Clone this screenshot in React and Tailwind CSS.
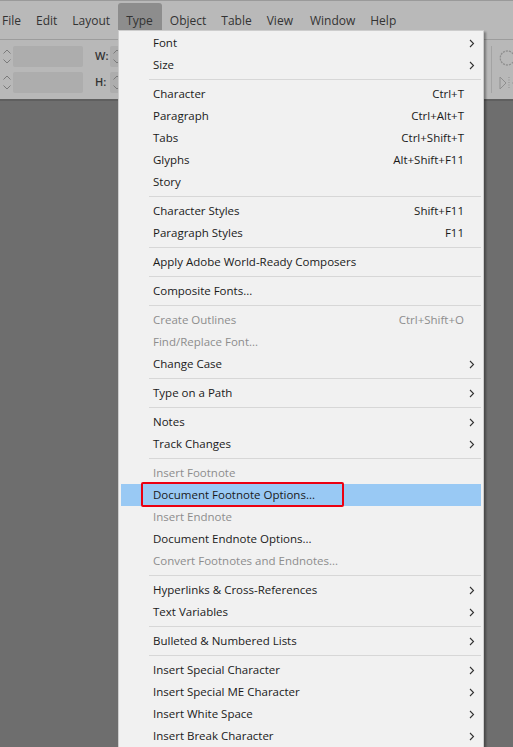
import React from "react";

const menuBar = ["File", "Edit", "Layout", "Type", "Object", "Table", "View", "Window", "Help"];

const items = [
  { label: "Font", sub: true },
  { label: "Size", sub: true },
  { sep: true },
  { label: "Character", key: "Ctrl+T" },
  { label: "Paragraph", key: "Ctrl+Alt+T" },
  { label: "Tabs", key: "Ctrl+Shift+T" },
  { label: "Glyphs", key: "Alt+Shift+F11" },
  { label: "Story" },
  { sep: true },
  { label: "Character Styles", key: "Shift+F11" },
  { label: "Paragraph Styles", key: "F11" },
  { sep: true },
  { label: "Apply Adobe World-Ready Composers" },
  { sep: true },
  { label: "Composite Fonts..." },
  { sep: true },
  { label: "Create Outlines", key: "Ctrl+Shift+O", off: true },
  { label: "Find/Replace Font...", off: true },
  { label: "Change Case", sub: true },
  { sep: true },
  { label: "Type on a Path", sub: true },
  { sep: true },
  { label: "Notes", sub: true },
  { label: "Track Changes", sub: true },
  { sep: true },
  { label: "Insert Footnote", off: true },
  { label: "Document Footnote Options...", active: true },
  { label: "Insert Endnote", off: true },
  { label: "Document Endnote Options..." },
  { label: "Convert Footnotes and Endnotes...", off: true },
  { sep: true },
  { label: "Hyperlinks & Cross-References", sub: true },
  { label: "Text Variables", sub: true },
  { sep: true },
  { label: "Bulleted & Numbered Lists", sub: true },
  { sep: true },
  { label: "Insert Special Character", sub: true },
  { label: "Insert Special ME Character", sub: true },
  { label: "Insert White Space", sub: true },
  { label: "Insert Break Character", sub: true },
];

const Chevron = () => (
  <svg width="6" height="9" viewBox="0 0 6 9" className="text-[#333]">
    <path d="M1 1 L4.5 4.5 L1 8" fill="none" stroke="currentColor" strokeWidth="1.1" />
  </svg>
);

const Spin = () => (
  <div className="flex flex-col items-center justify-center gap-[5px] w-[13px] h-full">
    <svg width="8" height="5" viewBox="0 0 8 5">
      <path d="M0.5 4.5 L4 1 L7.5 4.5" fill="none" stroke="#7a7a7a" strokeWidth="1" />
    </svg>
    <svg width="8" height="5" viewBox="0 0 8 5">
      <path d="M0.5 0.5 L4 4 L7.5 0.5" fill="none" stroke="#7a7a7a" strokeWidth="1" />
    </svg>
  </div>
);

const MenuRow = ({ item }) => {
  if (item.sep) {
    return (
      <div className="h-[7px] flex items-center pl-[28px]">
        <div className="h-px w-full bg-[#d7d7d7]" />
      </div>
    );
  }
  return (
    <div
      className={`relative h-[22px] flex items-center ${item.active ? "bg-[#99c9f4]" : ""} ${
        item.off ? "text-[#8d8d8d]" : "text-[#1a1a1a]"
      }`}
    >
      <span className="flex-1 pl-[32px] whitespace-nowrap">{item.label}</span>
      {item.key && <span className="whitespace-nowrap">{item.key}</span>}
      <span className="w-[17px] flex items-center pl-[5px]">{item.sub && <Chevron />}</span>
      {item.active && (
        <div className="absolute left-[20px] top-[-2px] w-[203px] h-[25px] border-2 border-[#ec0010] rounded-[2px]" />
      )}
    </div>
  );
};

export default function App() {
  return (
    <div
      className="relative w-[513px] h-[747px] overflow-hidden flex flex-col bg-[#6e6e6e]"
      style={{ fontFamily: '"Open Sans", "Noto Sans", sans-serif' }}
    >
      {/* menu bar */}
      <div className="h-[39px] bg-[#b9b9b9] border-t border-[#9a9a9a] flex items-start pt-[2px] -ml-[5px] text-[12px] text-[#333]">
        {menuBar.map((m) => (
          <div
            key={m}
            className={`h-[27px] px-[7px] mr-px flex items-center pt-[8px] ${
              m === "Type" ? "bg-[#8d8d8d] rounded-t-[3px] pl-[8px] pr-[9px]" : ""
            } ${m === "Window" ? "ml-[2px]" : ""}`}
          >
            {m}
          </div>
        ))}
      </div>

      {/* control toolbar */}
      <div className="h-[62px] bg-[#b8b8b8] border-t border-[#9c9c9c] border-b-2 border-b-[#5f5f5f] flex items-stretch">
        <div className="flex flex-col gap-[5px] pt-[6px]">
          <div className="flex h-[21px]">
            <Spin />
            <div className="w-[70px] bg-[#adadad] rounded-[2px]" />
          </div>
          <div className="flex h-[21px]">
            <Spin />
            <div className="w-[70px] bg-[#adadad] rounded-[2px]" />
          </div>
        </div>
        <div className="flex flex-col gap-[5px] pt-[6px] ml-[12px] text-[11px] font-semibold text-[#333]">
          <div className="flex h-[21px] items-center gap-[3px]">
            <span className="w-[12px]">W:</span>
            <div className="w-[20px] h-full bg-[#adadad] rounded-[2px] flex">
              <Spin />
            </div>
          </div>
          <div className="flex h-[21px] items-center gap-[3px]">
            <span className="w-[12px]">H:</span>
            <div className="w-[20px] h-full bg-[#adadad] rounded-[2px] flex">
              <Spin />
            </div>
          </div>
        </div>
        <div className="flex-1" />
        <div className="flex items-stretch">
          <div className="w-px my-[6px] bg-[#a3a3a3] mr-[7px]" />
          <div className="flex flex-col justify-around w-[14px] py-[4px]">
            <svg width="16" height="18" viewBox="0 0 16 18">
              <path d="M14 5 A7 7 0 1 0 14 13" fill="none" stroke="#8f8f8f" strokeWidth="1.3" strokeDasharray="2 1" />
            </svg>
            <svg width="16" height="14" viewBox="0 0 16 14">
              <path d="M1 1 L7 7 L1 13 Z" fill="none" stroke="#8f8f8f" strokeWidth="1" />
              <path d="M10 1 V13" stroke="#8f8f8f" strokeWidth="1" strokeDasharray="1 1.5" />
              <path d="M13 7 L16 5 V9 Z" fill="#8f8f8f" />
            </svg>
          </div>
        </div>
      </div>

      <div className="flex-1" />

      {/* Type dropdown menu */}
      <div className="absolute left-[118px] top-[30px] w-[366px] bg-[#f1f1f1] border border-[#cdcdcd] pt-px px-[2px] pb-2 shadow-[2px_2px_2px_rgba(0,0,0,0.35)] text-[11.5px]">
        {items.map((it, i) => (
          <MenuRow key={i} item={it} />
        ))}
      </div>
    </div>
  );
}
